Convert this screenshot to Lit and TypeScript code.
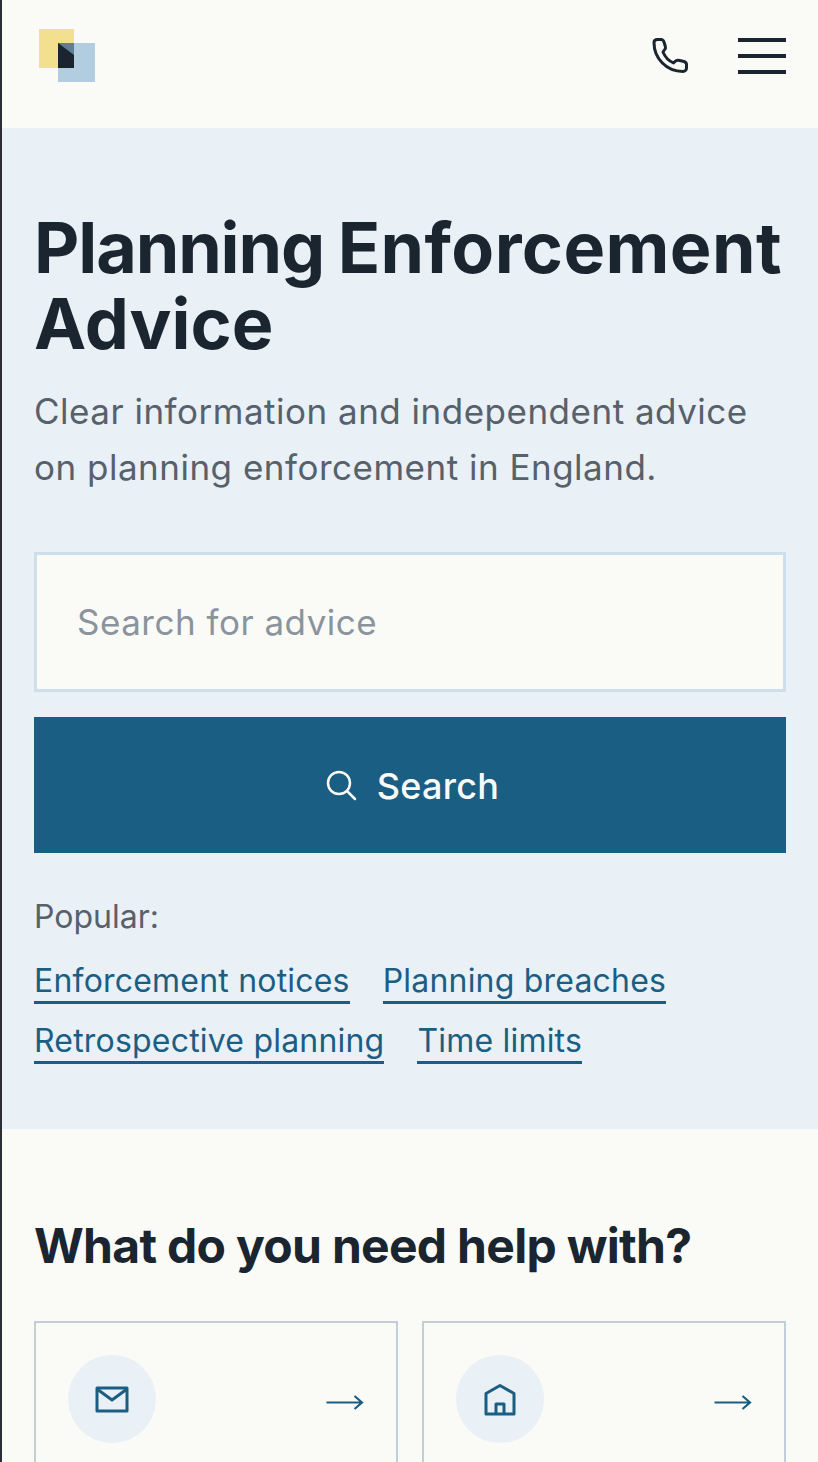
import { LitElement, html, css } from "lit";
import { customElement } from "lit/decorators.js";

@customElement("app-root")
export class AppRoot extends LitElement {
  static styles = css`
    :host {
      display: block;
      height: 1462px;
      overflow: hidden;
      background: #fafbf7;
      border-left: 2px solid #2b2f33;
      font-family: Inter, "Liberation Sans", sans-serif;
      color: #1b2530;
    }
    .header {
      height: 128px;
      box-sizing: border-box;
      padding: 28px 32px 0 36px;
      display: flex;
      justify-content: space-between;
      align-items: flex-start;
    }
    .logo { display: block; }
    .actions { display: flex; align-items: center; gap: 49px; padding-top: 9px; }
    .actions svg { display: block; }
    .burger { display: flex; flex-direction: column; gap: 12px; width: 48px; }
    .burger span { display: block; height: 4px; background: #1b2530; }
    .hero {
      height: 1001px;
      box-sizing: border-box;
      background: #e9f0f6;
      padding: 82px 32px 0;
    }
    h1 {
      margin: 0;
      font-size: 70px;
      line-height: 76px;
      font-weight: 700;
      letter-spacing: 0;
      word-spacing: -3px;
    }
    .w1 { letter-spacing: -1.1px; }
    .w2 { letter-spacing: 0.4px; }
    .lead {
      margin: 21px 0 0;
      font-size: 35px;
      line-height: 56px;
      letter-spacing: 0.5px;
      color: #56616c;
    }
    .input {
      margin-top: 57px;
      height: 140px;
      box-sizing: border-box;
      border: 3px solid #cddfea;
      background: #fafbf7;
      padding-left: 40px;
      display: flex;
      align-items: center;
      font-size: 35px;
      letter-spacing: 0.5px;
      color: #8b949c;
    }
    .btn {
      margin-top: 25px;
      height: 136px;
      box-sizing: border-box;
      padding-left: 4px;
      background: #1b5e83;
      color: #fafbf7;
      display: flex;
      align-items: center;
      justify-content: center;
      gap: 20px;
      font-size: 36px;
      font-weight: 500;
      letter-spacing: 0.3px;
    }
    .btn span { padding-top: 1px; }
    .popular {
      margin-top: 45px;
      font-size: 32px;
      line-height: 38px;
      color: #56616c;
    }
    .links {
      margin-top: 24px;
      display: flex;
      flex-wrap: wrap;
      gap: 16px 33px;
      width: 680px;
    }
    .links a {
      font-size: 32px;
      line-height: 42px;
      letter-spacing: 0.2px;
      height: 41px;
      color: #1b5e83;
      border-bottom: 3px solid #1b5e83;
    }
    .help { padding: 84px 32px 0; }
    h2 {
      margin: 0;
      font-size: 48px;
      line-height: 66px;
      font-weight: 700;
      letter-spacing: -0.7px;
    }
    .cards {
      margin-top: 42px;
      display: grid;
      grid-template-columns: 1fr 1fr;
      gap: 24px;
    }
    .card {
      border: 2px solid #c4ced7;
      padding: 32px;
      height: 300px;
      box-sizing: border-box;
      display: flex;
      justify-content: space-between;
      align-items: flex-start;
    }
    .circle {
      width: 88px;
      height: 88px;
      border-radius: 50%;
      background: #e9f0f6;
      display: flex;
      align-items: center;
      justify-content: center;
    }
    .arrow { display: block; margin-top: 35px; }
  `;

  private arrow() {
    return html`<svg class="arrow" width="38" height="24" viewBox="0 0 38 24" fill="none" stroke="#1b5e83" stroke-width="2.200">
      <path d="M0.500 12.500H36M28.500 6l7.500 6.500-7.500 6.500" />
    </svg>`;
  }

  render() {
    return html`
      <header class="header">
        <svg class="logo" width="57" height="54" viewBox="0 0 57 54">
          <rect x="1" y="1" width="35" height="39" fill="#f2e08e" />
          <rect x="20" y="15" width="37" height="39" fill="#b2cde0" />
          <rect x="20" y="15" width="16" height="25" fill="#5f7f95" />
          <path d="M20 15 L36 27 V40 H20 Z" fill="#1b2530" />
        </svg>
        <div class="actions">
          <svg width="38" height="38" viewBox="0 1 38 38" fill="none" stroke="#1b2530" stroke-width="3" stroke-linejoin="round">
            <path d="M3 6.500C3 4.500 4.500 3.500 6.500 3.500H10C11.500 3.500 12.500 4.500 13 6L14.500 11C15 12.500 14 13.500 13 14.500L12 16C14 21 18 25 22.500 27L24 25.500C25 24.500 26 23.800 27.500 24.300L33 25.500C34.500 26 35.500 27 35.500 28.500V32C35.500 34 34 35.500 32 35.500C15 35.500 3 22 3 6.500Z" />
          </svg>
          <div class="burger"><span></span><span></span><span></span></div>
        </div>
      </header>
      <section class="hero">
        <h1><span class="w1">Planning</span> <span class="w2">Enforcement</span> Advice</h1>
        <p class="lead">Clear information and independent advice on planning enforcement in England.</p>
        <div class="input">Search for advice</div>
        <div class="btn">
          <svg width="32" height="32" viewBox="0 0 32 32" fill="none" stroke="#fafbf7" stroke-width="2.500" stroke-linecap="round">
            <circle cx="14" cy="14" r="11" /><path d="M22 22l8 8" />
          </svg>
          <span>Search</span>
        </div>
        <div class="popular">Popular:</div>
        <div class="links">
          <a>Enforcement notices</a>
          <a>Planning breaches</a>
          <a>Retrospective planning</a>
          <a>Time limits</a>
        </div>
      </section>
      <section class="help">
        <h2>What do you need help with?</h2>
        <div class="cards">
          <div class="card">
            <div class="circle">
              <svg width="34" height="28" viewBox="0 0 34 28" fill="none" stroke="#1b5e83" stroke-width="3" stroke-linejoin="round">
                <rect x="2" y="3" width="30" height="23" /><path d="M2 4l15 11L32 4" />
              </svg>
            </div>
            ${this.arrow()}
          </div>
          <div class="card">
            <div class="circle">
              <svg width="32" height="34" viewBox="0 0 32 34" fill="none" stroke="#1b5e83" stroke-width="3" stroke-linejoin="round">
                <path d="M2 11.500L16 3.500l14 8V32H2Z" /><path d="M12 32V22h8v10" />
              </svg>
            </div>
            ${this.arrow()}
          </div>
        </div>
      </section>
    `;
  }
}
